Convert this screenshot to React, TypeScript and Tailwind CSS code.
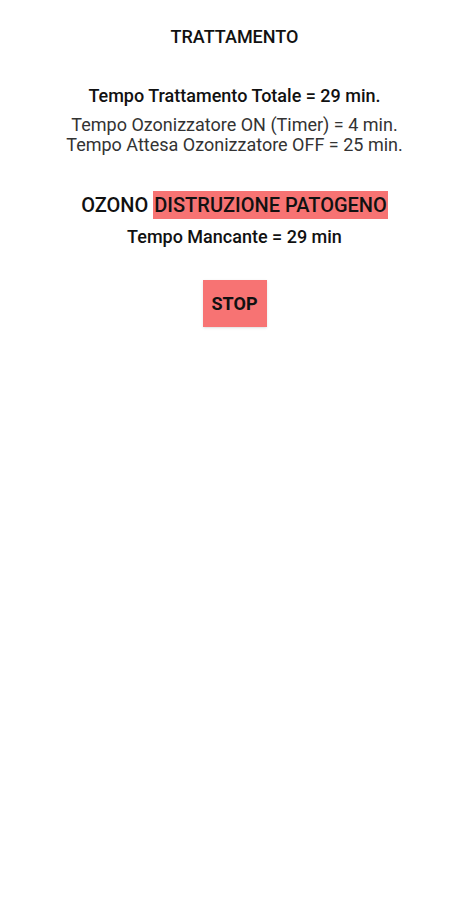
export default function App() {
  return (
    <div className="min-h-[900px] bg-white font-['Roboto',sans-serif] text-[#111] flex flex-col items-center">
      <h1 className="mt-[26px] text-[18px] leading-[22px] font-medium">TRATTAMENTO</h1>

      <p className="mt-[37px] text-[18px] leading-[22px] font-medium">Tempo Trattamento Totale = 29 min.</p>
      <div className="mt-[8px] text-[18px] leading-[20px] text-[#333] text-center">
        <p>Tempo Ozonizzatore ON (Timer) = 4 min.</p>
        <p>Tempo Attesa Ozonizzatore OFF = 25 min.</p>
      </div>

      <div className="mt-[36px] flex items-center text-[20px] leading-[28px] font-medium">
        <span className="mr-[5px]">OZONO</span>
        <span className="bg-[#f77373] px-[1px]">DISTRUZIONE PATOGENO</span>
      </div>
      <p className="mt-[7px] text-[18px] leading-[22px] font-medium">Tempo Mancante = 29 min</p>

      <button className="mt-[32px] w-[64px] h-[47px] bg-[#f77373] text-[18px] font-bold shadow-sm">
        STOP
      </button>
    </div>
  );
}
